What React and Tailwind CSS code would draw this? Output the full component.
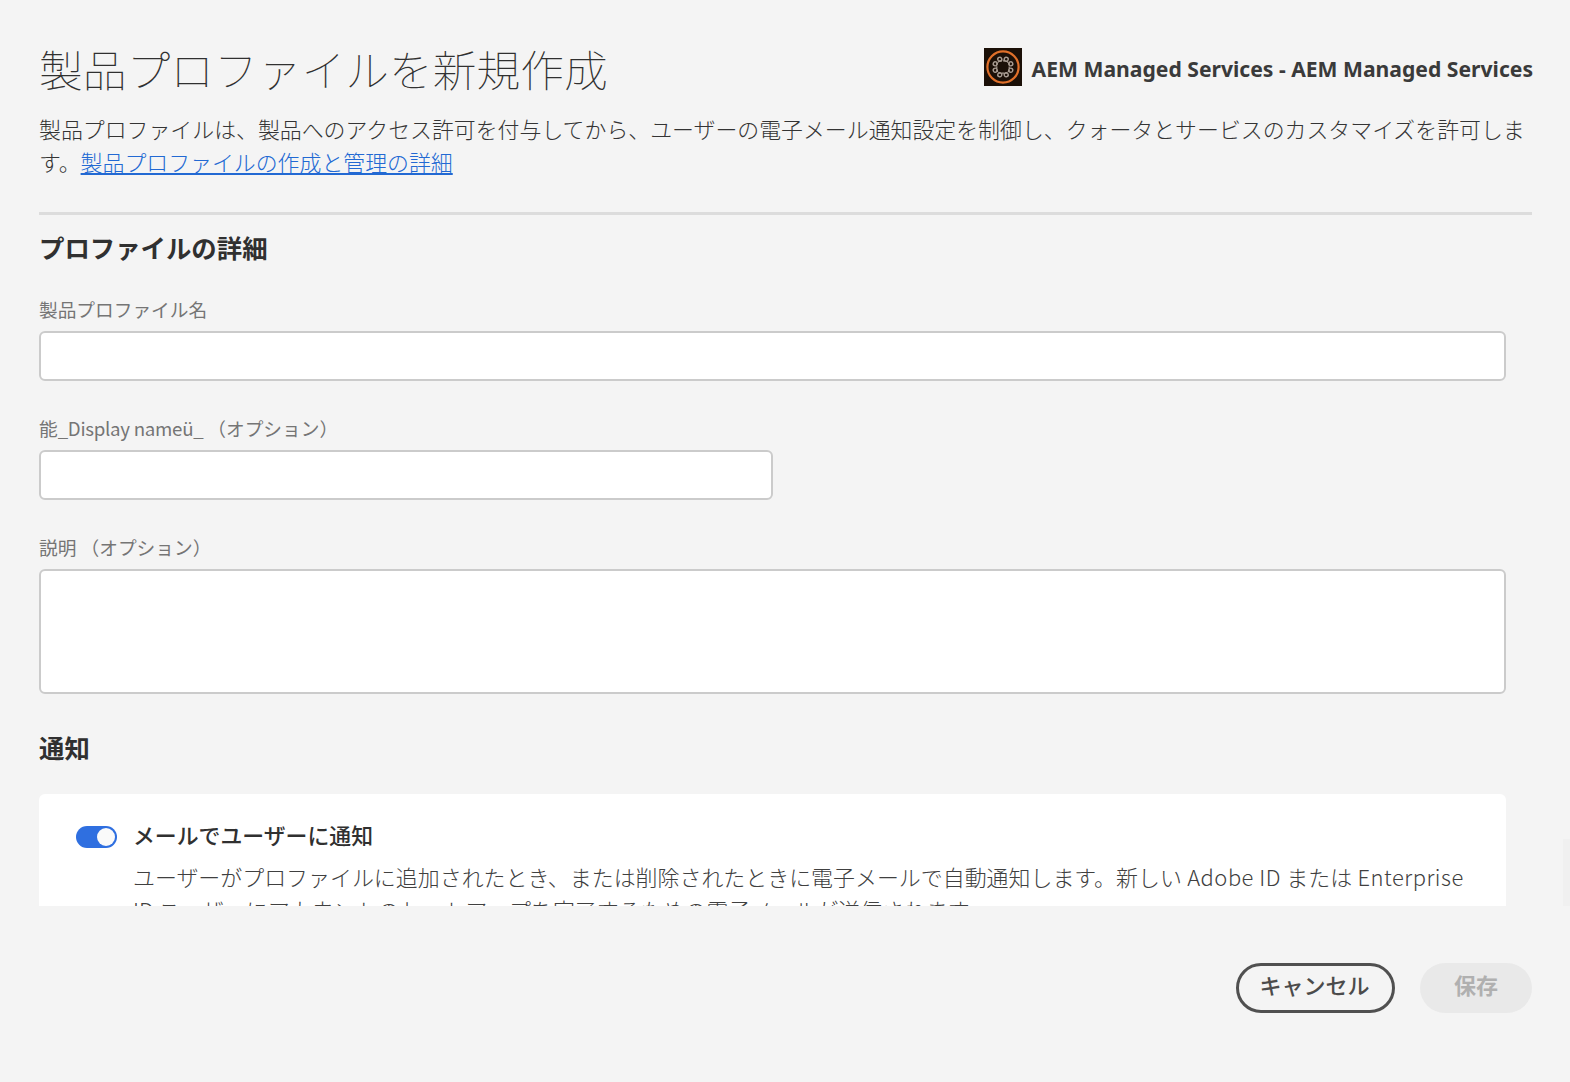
const FONT = "font-['Noto_Sans_CJK_JP',sans-serif]";

function ProductIcon() {
  return (
    <svg width="38" height="38" viewBox="0 0 38 38" className="shrink-0">
      <rect width="38" height="38" fill="#1b1008" />
      <circle cx="19" cy="19" r="15.6" fill="none" stroke="#e0702a" strokeWidth="2.2" />
      <g fill="none" stroke="#a89c92" strokeWidth="1.4">
        {[22.5, 67.5, 112.5, 157.5, 202.5, 247.5, 292.5, 337.5].map((a) => (
          <circle key={a} cx="19" cy="10.6" r="2" transform={`rotate(${a} 19 19)`} />
        ))}
        <path d="M15.6 12.8h6.8l2.8 2.8v6.8l-2.8 2.8h-6.8l-2.8-2.8v-6.8z" strokeWidth="1.2" strokeDasharray="2.4 1" />
      </g>
    </svg>
  );
}

function Field({ label, className, boxClass }) {
  return (
    <div className={className}>
      <div className="h-[28px] text-[18.7px] leading-[28px] font-normal whitespace-pre text-[#757575]">{label}</div>
      <div className={`mt-[8px] rounded-[6px] border-2 border-[#cbcbcb] bg-white ${boxClass}`} />
    </div>
  );
}

export default function App() {
  return (
    <div className={`relative h-[1082px] w-[1570px] overflow-hidden bg-[#f4f4f4] text-[#303030] ${FONT}`}>
      <header className="flex h-[112px] justify-between pr-[38px] pl-[39px]">
        <h1 className="mt-[38px] text-[43.75px] leading-[60px] font-thin whitespace-nowrap">製品プロファイルを新規作成</h1>
        <div className="mt-[48px] flex h-[38px] items-center gap-[10px]">
          <ProductIcon />
          <span className="mt-[4px] -mr-px font-['Noto_Sans',sans-serif] text-[21.13px] font-bold whitespace-nowrap text-[#3a3a3a]">
            AEM Managed Services - AEM Managed Services
          </span>
        </div>
      </header>

      <p className="ml-[39px] h-[100px] text-[21.9px] leading-[33px] font-light whitespace-nowrap text-[#343434]">
        製品プロファイルは、製品へのアクセス許可を付与してから、ユーザーの電子メール通知設定を制御し、クォータとサービスのカスタマイズを許可しま
        <br />
        す。
        <span className="text-[#2269d3] underline decoration-2 underline-offset-[2px]">製品プロファイルの作成と管理の詳細</span>
      </p>

      <main className="mr-[38px] ml-[39px] h-[694px] overflow-hidden border-t-[3px] border-[#dcdcdc]">
        <h2 className="mt-[13px] h-[38px] text-[25.4px] leading-[38px] font-semibold">プロファイルの詳細</h2>
        <Field label="製品プロファイル名" className="mt-[29px]" boxClass="h-[50px] w-[1467px]" />
        <Field
          label={
            <>
              能<span className="tracking-[-0.28px]">_Display nameü_ </span>（オプション）
            </>
          }
          className="mt-[33px]"
          boxClass="h-[50px] w-[734px]"
        />
        <Field label="説明 （オプション）" className="mt-[33px]" boxClass="h-[125px] w-[1467px]" />
        <h2 className="mt-[34px] h-[38px] text-[25.4px] leading-[38px] font-semibold">通知</h2>
        <section className="mt-[28px] flex h-[200px] w-[1467px] rounded-[6px] bg-white pl-[37px]">
          <div className="mt-[32px] flex h-[22px] w-[41px] shrink-0 justify-end rounded-full bg-[#2f6fe0] p-[2px]">
            <div className="size-[18px] rounded-full bg-[#fafafa]" />
          </div>
          <div className="ml-[16px]">
            <div className="mt-[24px] h-[34px] text-[21.86px] leading-[34px] font-medium">メールでユーザーに通知</div>
            <p className="mt-[8px] text-[21.95px] leading-[33px] font-light whitespace-nowrap text-[#404040]">
              ユーザーがプロファイルに追加されたとき、または削除されたときに電子メールで自動通知します。新しい
              <span className="tracking-[0.5px]"> Adobe ID </span>または
              <span className="tracking-[0.5px]"> Enterprise</span>
              <br />
              ID ユーザーにアカウントのセットアップを完了するための電子メールが送信されます。
            </p>
          </div>
        </section>
      </main>

      <div className="absolute top-[839px] right-0 h-[67px] w-[7px] bg-[#f0f0f0]" />

      <footer className="mt-[57px] flex justify-end gap-[25px] pr-[38px]">
        <button className="flex h-[50px] w-[159px] items-center justify-center rounded-full border-[3px] border-[#505050] pr-[2px] pb-[7px] text-[22px] font-medium whitespace-nowrap text-[#4b4b4b]">
          キャンセル
        </button>
        <button className="flex h-[50px] w-[112px] items-center justify-center rounded-full bg-[#e9e9e9] pb-[7px] text-[22px] font-semibold text-[#b0b0b0]">
          保存
        </button>
      </footer>
    </div>
  );
}
